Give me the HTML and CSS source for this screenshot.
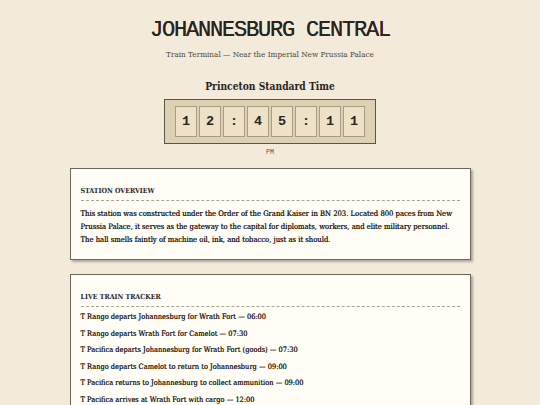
FILE: index.html
```html
<!DOCTYPE html>
<html lang="en">
<head>
<meta charset="utf-8">
<title>Johannesburg Central</title>
<link rel="stylesheet" href="styles.css">
</head>
<body>
<header class="masthead">
  <h1 class="title">JOHANNESBURG CENTRAL</h1>
  <p class="subtitle">Train Terminal — Near the Imperial New Prussia Palace</p>
</header>

<section class="clock">
  <h2 class="clock-label">Princeton Standard Time</h2>
  <div class="clock-face">
    <span class="tile">1</span>
    <span class="tile">2</span>
    <span class="tile sep">:</span>
    <span class="tile">4</span>
    <span class="tile">5</span>
    <span class="tile sep">:</span>
    <span class="tile">1</span>
    <span class="tile">1</span>
  </div>
  <div class="meridiem">PM</div>
</section>

<main class="panels">
  <section class="card">
    <h3 class="card-title">STATION OVERVIEW</h3>
    <p class="card-text">This station was constructed under the Order of the Grand Kaiser in BN 203. Located 800 paces from New Prussia Palace, it serves as the gateway to the capital for diplomats, workers, and elite military personnel. The hall smells faintly of machine oil, ink, and tobacco, just as it should.</p>
  </section>

  <section class="card">
    <h3 class="card-title">LIVE TRAIN TRACKER</h3>
    <ul class="tracker">
      <li>T Rango departs Johannesburg for Wrath Fort — 06:00</li>
      <li>T Rango departs Wrath Fort for Camelot — 07:30</li>
      <li>T Pacifica departs Johannesburg for Wrath Fort (goods) — 07:30</li>
      <li>T Rango departs Camelot to return to Johannesburg — 09:00</li>
      <li>T Pacifica returns to Johannesburg to collect ammunition — 09:00</li>
      <li>T Pacifica arrives at Wrath Fort with cargo — 12:00</li>
    </ul>
  </section>
</main>
</body>
</html>
```

FILE: styles.css
```css
* {
  box-sizing: border-box;
}

body {
  margin: 0;
  background: #f3ead9;
  color: #2a241d;
  font-family: "DejaVu Serif Condensed", "DejaVu Serif", serif;
  font-stretch: condensed;
}

.masthead {
  text-align: center;
}

.title {
  margin: 19px 0 0;
  font-family: "Liberation Mono", "DejaVu Sans Mono", monospace;
  font-size: 22px;
  line-height: 24px;
  font-weight: normal;
  letter-spacing: -1.2px;
  color: #2a241d;
  text-shadow: 0 0 0.4px #2a241d;
}

.subtitle {
  margin: 6px 0 0;
  font-size: 8.1px;
  line-height: 10px;
  color: #4f483d;
}

.clock {
  display: flex;
  flex-direction: column;
  align-items: center;
}

.clock-label {
  margin: 20px 0 0;
  font-size: 10.2px;
  line-height: 14px;
  font-weight: bold;
  color: #2a241d;
}

.clock-face {
  margin-top: 6px;
  display: flex;
  gap: 2px;
  padding: 6px 10px;
  background: #ddd0b3;
  border: 1px solid #5d5444;
}

.tile {
  width: 22px;
  height: 31px;
  display: flex;
  align-items: center;
  justify-content: center;
  background: #ede2c8;
  border: 1px solid #a89c85;
  font-family: "Liberation Mono", "DejaVu Sans Mono", monospace;
  font-size: 13.5px;
  font-weight: bold;
  color: #2a241d;
}

.meridiem {
  margin-top: 5px;
  font-family: "Liberation Mono", monospace;
  font-size: 6.5px;
  line-height: 8px;
  color: #5f574b;
}

.panels {
  width: 401px;
  margin: 11px auto 0;
  display: flex;
  flex-direction: column;
  gap: 14px;
}

.card {
  background: #fffdf5;
  border: 1px solid #6d665a;
  box-shadow: 2px 2px 2px rgba(0, 0, 0, 0.28);
  padding: 17px 10px 13px;
}

.card-title {
  margin: 0;
  padding-bottom: 4px;
  border-bottom: 1px dashed #aaa394;
  font-size: 7px;
  line-height: 10px;
  font-weight: bold;
  color: #2a241d;
}

.card-text {
  margin: 6px 0 0;
  font-size: 7.6px;
  line-height: 13px;
  color: #2a241d;
  text-shadow: 0 0 0.3px #2a241d;
}

.tracker {
  list-style: none;
  margin: 5px 0 0;
  padding: 0;
  display: flex;
  flex-direction: column;
  gap: 6.5px;
}

.tracker li {
  font-size: 7.4px;
  line-height: 10px;
  color: #2a241d;
  text-shadow: 0 0 0.3px #2a241d;
}
```
